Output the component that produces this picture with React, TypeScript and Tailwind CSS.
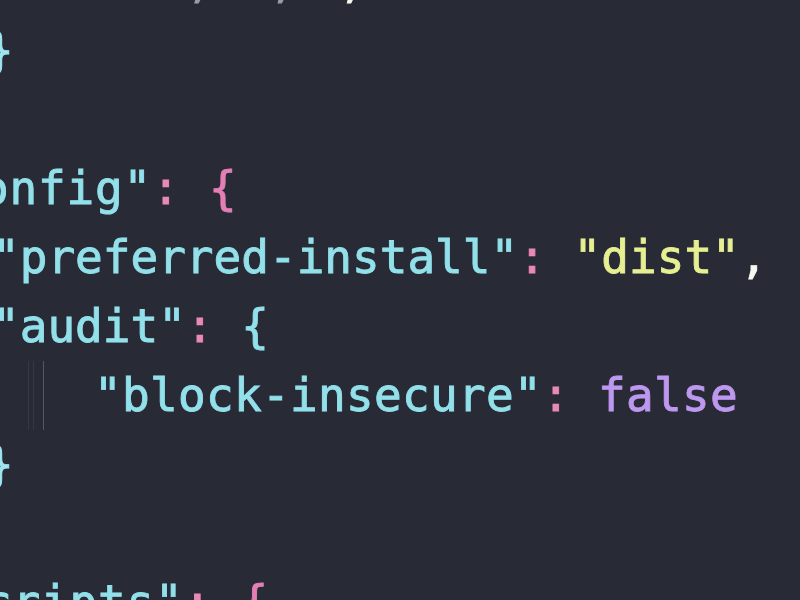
export default function App() {
    const line = "h-[69px] whitespace-pre";

    return (
        <div className="w-[800px] h-[600px] overflow-hidden bg-[#282a36]">
            <div className="-mt-[53px] font-['DejaVu_Sans_Mono',monospace] text-[46px] leading-[69px] blur-[0.6px] [-webkit-text-stroke:0.9px_currentColor]">
                {/* bottom of the line above, only the commas show */}
                <div className={`${line} ml-[-8px]`}>
                    <span className="text-[#9a9ca8]">{"       ,  , "}</span>
                    <span className="ml-[14px] text-[#f8f8f2]">,</span>
                </div>

                <div className={`${line} ml-[-14px] text-[#9ee6ef]`}>{"}"}</div>

                <div className={line}> </div>

                {/* "config": { */}
                <div className={`${line} ml-[-76px] tracking-[0.8px]`}>
                    <span className="text-[#92e0ea]">"config"</span>
                    <span className="text-[#e889b8]">:</span>
                    <span> </span>
                    <span className="text-[#e47fb6]">{"{"}</span>
                </div>

                <div className={`${line} ml-[-8px]`}>
                    <span className="text-[#92e0ea]">"preferred-install"</span>
                    <span className="text-[#e889b8]">:</span>
                    <span> </span>
                    <span className="text-[#e6ef92]">"dist"</span>
                    <span className="text-[#f8f8f2]">,</span>
                </div>

                <div className={`${line} ml-[-8px]`}>
                    <span className="text-[#92e0ea]">"audit"</span>
                    <span className="text-[#e889b8]">:</span>
                    <span> </span>
                    <span className="text-[#92e0ea]">{"{"}</span>
                </div>

                {/* block-insecure, with the indent guides */}
                <div className={`${line} flex`}>
                    <div className="flex w-[94px] shrink-0">
                        <div className="ml-[28px] w-px bg-[#363845]" />
                        <div className="ml-[4px] w-px bg-[#363845]" />
                        <div className="ml-[9px] w-px bg-[#555766]" />
                    </div>
                    <div className="tracking-[0.3px]">
                        <span className="text-[#92e0ea]">"block-insecure"</span>
                        <span className="text-[#e889b8]">:</span>
                        <span> </span>
                        <span className="text-[#bd98f0]">false</span>
                    </div>
                </div>

                <div className={`${line} ml-[-14px] text-[#9ee6ef]`}>{"}"}</div>

                <div className={line}> </div>

                <div className={`${line} ml-[-73px] tracking-[0.8px]`}>
                    <span className="text-[#92e0ea]">"scripts"</span>
                    <span className="text-[#e889b8]">:</span>
                    <span> </span>
                    <span className="text-[#e47fb6]">{"{"}</span>
                </div>
            </div>
        </div>
    );
}
